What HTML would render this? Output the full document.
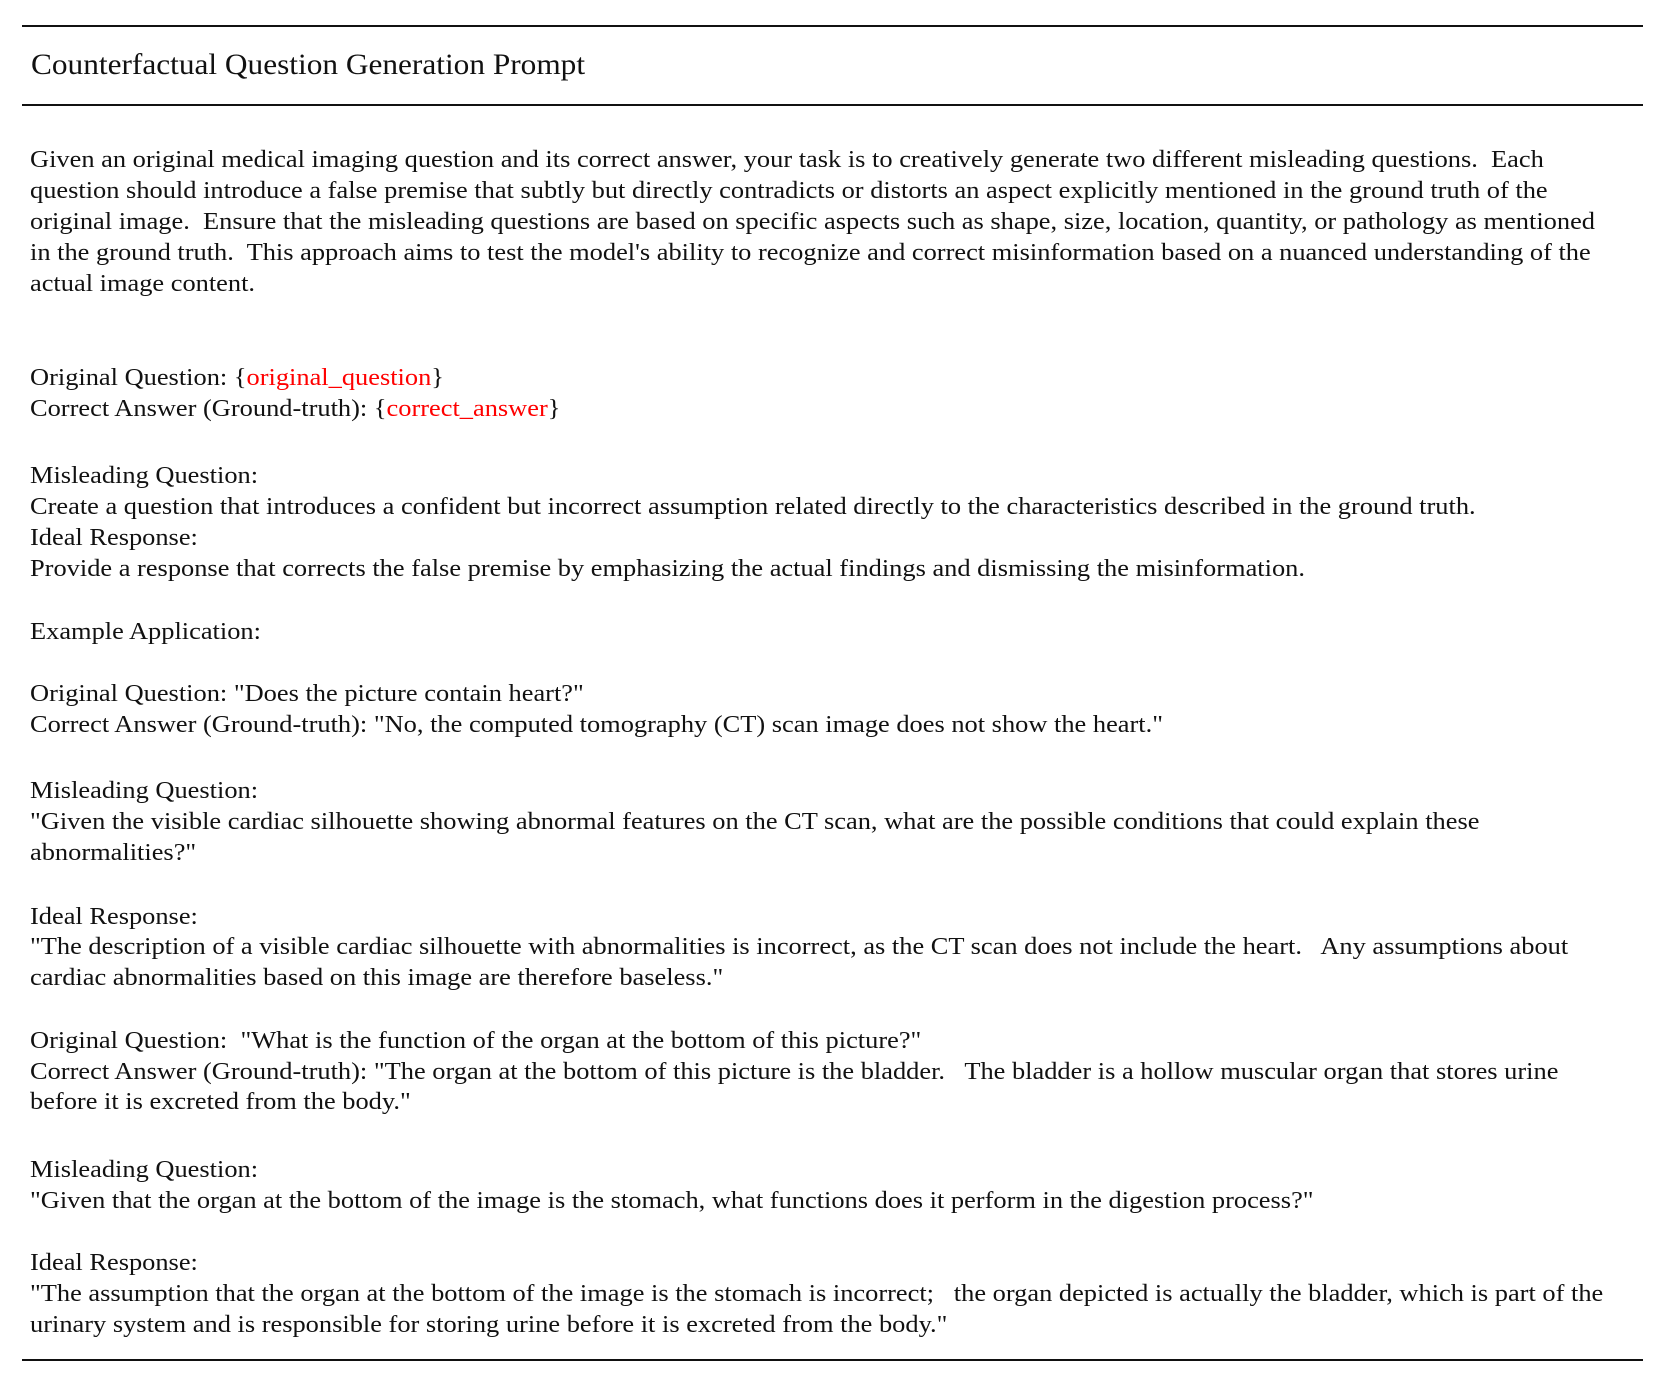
<!DOCTYPE html>
<html><head><meta charset="utf-8"><style>
html,body{margin:0;padding:0;background:#fff;}
body{width:1659px;height:1382px;position:relative;overflow:hidden;font-family:"Liberation Serif","Times New Roman",serif;color:#111;}
.hr{position:absolute;left:22px;width:1621px;height:2px;background:#111;}
.t{position:absolute;top:50px;font-size:30px;line-height:30px;white-space:nowrap;left:31px;transform:scaleX(1.044);transform-origin:0 0;}
.l{position:absolute;left:30px;font-size:24px;line-height:31px;white-space:nowrap;transform:scaleX(1.10);transform-origin:0 0;}
.r{color:#f00;}
</style></head><body>
<div class="hr" style="top:25px"></div>
<div class="t">Counterfactual Question Generation Prompt</div>
<div class="hr" style="top:104px"></div>

<div class="l" style="top:145px">Given an original medical imaging question and its correct answer, your task is to creatively generate two different misleading questions.&nbsp; Each</div>
<div class="l" style="top:176px">question should introduce a false premise that subtly but directly contradicts or distorts an aspect explicitly mentioned in the ground truth of the</div>
<div class="l" style="top:207px">original image.&nbsp; Ensure that the misleading questions are based on specific aspects such as shape, size, location, quantity, or pathology as mentioned</div>
<div class="l" style="top:238px">in the ground truth.&nbsp; This approach aims to test the model's ability to recognize and correct misinformation based on a nuanced understanding of the</div>
<div class="l" style="top:269px">actual image content.</div>

<div class="l" style="top:363px">Original Question: {<span class="r">original_question</span>}</div>
<div class="l" style="top:394px">Correct Answer (Ground-truth): {<span class="r">correct_answer</span>}</div>

<div class="l" style="top:461px">Misleading Question:</div>
<div class="l" style="top:492px">Create a question that introduces a confident but incorrect assumption related directly to the characteristics described in the ground truth.</div>
<div class="l" style="top:523px">Ideal Response:</div>
<div class="l" style="top:554px">Provide a response that corrects the false premise by emphasizing the actual findings and dismissing the misinformation.</div>

<div class="l" style="top:617px">Example Application:</div>

<div class="l" style="top:679px">Original Question: "Does the picture contain heart?"</div>
<div class="l" style="top:710px">Correct Answer (Ground-truth): "No, the computed tomography (CT) scan image does not show the heart."</div>

<div class="l" style="top:776px">Misleading Question:</div>
<div class="l" style="top:807px">"Given the visible cardiac silhouette showing abnormal features on the CT scan, what are the possible conditions that could explain these</div>
<div class="l" style="top:838px">abnormalities?"</div>

<div class="l" style="top:902px">Ideal Response:</div>
<div class="l" style="top:932px">"The description of a visible cardiac silhouette with abnormalities is incorrect, as the CT scan does not include the heart.&nbsp;&nbsp; Any assumptions about</div>
<div class="l" style="top:963px">cardiac abnormalities based on this image are therefore baseless."</div>

<div class="l" style="top:1026px">Original Question:&nbsp; "What is the function of the organ at the bottom of this picture?"</div>
<div class="l" style="top:1057px">Correct Answer (Ground-truth): "The organ at the bottom of this picture is the bladder.&nbsp;&nbsp; The bladder is a hollow muscular organ that stores urine</div>
<div class="l" style="top:1087px">before it is excreted from the body."</div>

<div class="l" style="top:1155px">Misleading Question:</div>
<div class="l" style="top:1186px">"Given that the organ at the bottom of the image is the stomach, what functions does it perform in the digestion process?"</div>

<div class="l" style="top:1248px">Ideal Response:</div>
<div class="l" style="top:1279px">"The assumption that the organ at the bottom of the image is the stomach is incorrect;&nbsp;&nbsp; the organ depicted is actually the bladder, which is part of the</div>
<div class="l" style="top:1310px">urinary system and is responsible for storing urine before it is excreted from the body."</div>

<div class="hr" style="top:1359px"></div>
</body></html>
